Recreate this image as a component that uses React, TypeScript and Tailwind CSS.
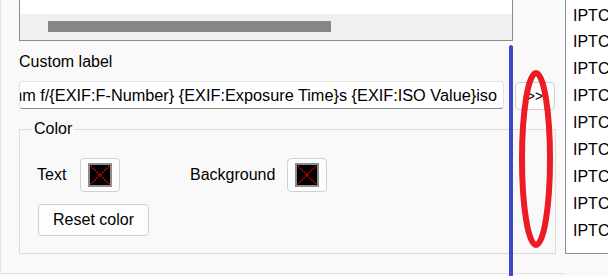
import React from "react";

function Swatch() {
  return (
    <button className="w-[40px] h-[34px] flex items-center justify-center rounded-[4px] border border-[#d0d0d0] bg-[#fdfdfd]">
      <svg width="24" height="24" viewBox="0 0 24 24">
        <rect x="0" y="0" width="24" height="24" fill="#8c8c8c" />
        <rect x="2" y="2" width="20" height="20" fill="#000" />
        <line x1="3" y1="3" x2="21" y2="21" stroke="#ff0000" strokeWidth="1.4" strokeDasharray="1.5 1.2" />
        <line x1="21" y1="3" x2="3" y2="21" stroke="#ff0000" strokeWidth="1.4" strokeDasharray="1.5 1.2" />
      </svg>
    </button>
  );
}

export default function App() {
  const rows = Array.from({ length: 9 });
  return (
    <div className="relative w-[608px] h-[276px] overflow-hidden bg-[#f9f9f9] font-['Liberation_Sans',Arial,sans-serif] text-[16px] text-black">
      <div className="flex h-[274px]">
        {/* left panel */}
        <div className="w-[565px] shrink-0 border-l border-b border-[#e3e3e3] flex flex-col">
          {/* top box with horizontal scrollbar */}
          <div className="ml-[18px] w-[494px] h-[41px] border-x border-b border-[#8c8c8c] bg-white flex flex-col">
            <div className="h-[14px] bg-white" />
            <div className="h-[26px] bg-[#f0f0f0] pt-[7px] pl-[28px]">
              <div className="w-[283px] h-[11px] bg-[#868686]" />
            </div>
          </div>

          <div className="ml-[18px] mt-[11px] h-[20px] leading-[20px]">Custom label</div>

          <div className="mt-[9px] ml-[18px] flex items-start h-[29px]">
            <div className="w-[485px] h-[28px] rounded-[4px] border border-[#e2e2e2] border-b-[#868686] bg-white flex items-center justify-end overflow-hidden pr-[6px]">
              <span className="whitespace-nowrap leading-[20px] text-[16.3px]">
                {"{EXIF:Model} {EXIF:Focal Length}mm f/{EXIF:F-Number} {EXIF:Exposure Time}s {EXIF:ISO Value}iso"}
              </span>
            </div>
            <button className="ml-[11px] mt-[1px] w-[40px] h-[28px] rounded-[4px] border border-[#d0d0d0] bg-[#fdfdfd] text-[14px] leading-[20px] flex items-center justify-center">
              &gt;&gt;
            </button>
          </div>

          {/* Color group */}
          <div className="relative mt-[19px] ml-[18px] w-[537px] h-[125px] border border-[#dcdcdc]">
            <div className="absolute left-[12px] top-[-11px] px-[2px] h-[20px] leading-[20px] bg-[#f9f9f9]">Color</div>
            <div className="pt-[28px] pl-[17px] flex items-center">
              <span className="w-[43px] leading-[20px]">Text</span>
              <Swatch />
              <span className="ml-[70px] w-[97px] leading-[20px]">Background</span>
              <Swatch />
            </div>
            <button className="mt-[12px] ml-[18px] w-[111px] h-[32px] rounded-[4px] border border-[#d0d0d0] bg-[#fdfdfd] leading-[20px] flex items-center justify-center">
              Reset color
            </button>
          </div>
        </div>

        {/* right list */}
        <div className="flex-1 h-[254px] border-l border-b border-[#8f8f8f] bg-white overflow-hidden pt-[2.5px] pl-[7px]">
          {rows.map((_, i) => (
            <div key={i} className="h-[26.875px] leading-[26.875px] whitespace-nowrap overflow-hidden">
              IPTC
            </div>
          ))}
        </div>
      </div>

      {/* annotations */}
      <div className="absolute left-[509px] top-[45px] w-[4px] h-[240px] rounded-t-full bg-[#3f48cc]" />
      <svg className="absolute left-0 top-0 pointer-events-none" width="608" height="276">
        <ellipse cx="536" cy="159" rx="14" ry="86" fill="none" stroke="#ed1c24" strokeWidth="6" />
      </svg>
    </div>
  );
}
